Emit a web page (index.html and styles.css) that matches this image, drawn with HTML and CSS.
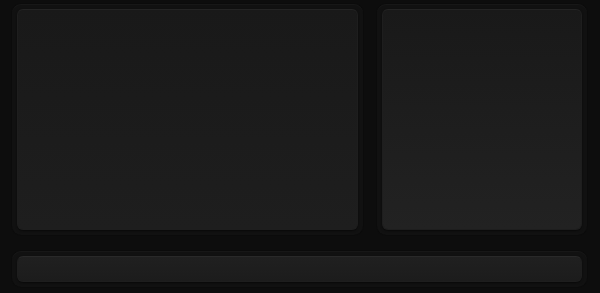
FILE: index.html
```html
<!DOCTYPE html>
<html>
<head>
<meta charset="utf-8">
<link rel="stylesheet" href="styles.css">
</head>
<body>
<div class="app">
  <div class="top">
    <div class="frame frame-main"><div class="panel"></div></div>
    <div class="frame frame-side"><div class="panel panel-side"></div></div>
  </div>
  <div class="frame frame-bar"><div class="panel panel-bar"></div></div>
</div>
</body>
</html>
```

FILE: styles.css
```css
html, body {
  margin: 0;
  padding: 0;
  background: #0d0d0d;
  width: 600px;
  height: 293px;
  overflow: hidden;
}
.app {
  box-sizing: border-box;
  width: 600px;
  height: 293px;
  padding: 4px 13px 6px 12px;
  display: flex;
  flex-direction: column;
  gap: 16px;
}
.top {
  display: flex;
  gap: 14px;
  height: 231px;
}
.frame {
  box-sizing: border-box;
  background: #111111;
  border-radius: 9px;
  padding: 5px;
  box-shadow: inset 0 1px 0 #171717, 0 0 1px #090909;
}
.frame-main { width: 351px; }
.frame-side { flex: 1; }
.frame-bar { height: 36px; }
.panel {
  box-sizing: border-box;
  height: 100%;
  border-radius: 6px;
  background: linear-gradient(to bottom, #191919, #1e1e1e);
  border: 1px solid #1e1e1e;
  border-top-color: #242424;
  box-shadow: 0 1px 2px rgba(0,0,0,0.5);
}
.panel-side {
  background: linear-gradient(to bottom, #191919, #222222);
}
.panel-bar {
  background: linear-gradient(to bottom, #202020, #1c1c1c);
  border-top-color: #292929;
}
```
